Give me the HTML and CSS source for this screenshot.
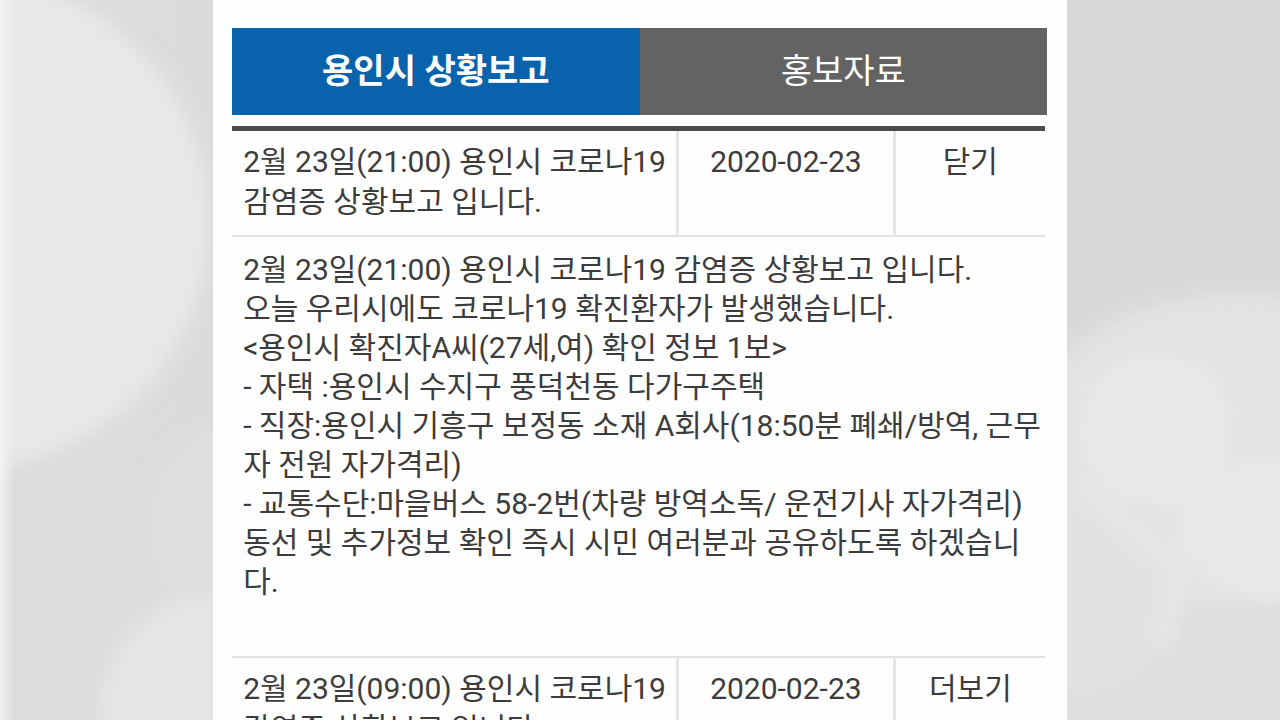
FILE: index.html
```html
<!DOCTYPE html>
<html lang="ko">
<head>
    <meta charset="UTF-8">
    <title>용인시 상황보고</title>
    <meta name="viewport" content="width=device-width, initial-scale=1.0">
    <link rel="stylesheet" href="styles.css">
</head>
<body>
    <svg class="backdrop" viewBox="0 0 1280 720" preserveAspectRatio="none" aria-hidden="true">
        <defs>
            <filter id="soft" x="-20%" y="-20%" width="140%" height="140%">
                <feGaussianBlur stdDeviation="9"/>
            </filter>
            <linearGradient id="base">
                <stop offset="0" stop-color="#dcdcdc"/>
                <stop offset="1" stop-color="#d8d8d8"/>
            </linearGradient>
            <linearGradient id="edge">
                <stop offset="0" stop-color="#f2f2f2"/>
                <stop offset="1" stop-color="#f2f2f2" stop-opacity="0"/>
            </linearGradient>
        </defs>
        <rect width="1280" height="720" fill="url(#base)"/>
        <g filter="url(#soft)">
            <ellipse cx="240" cy="530" rx="95" ry="110" fill="#dedede"/>
            <circle cx="-38" cy="222" r="247" fill="#e8e8e8"/>
            <circle cx="215" cy="710" r="116" fill="#e5e5e5"/>
            <rect x="1040" y="590" width="260" height="150" fill="#dedede"/>
            <ellipse cx="1240" cy="450" rx="220" ry="157" fill="#e3e3e3"/>
            <ellipse cx="1285" cy="528" rx="110" ry="72" fill="#e8e8e8"/>
            <circle cx="1070" cy="585" r="112" fill="#e2e2e2"/>
            <circle cx="1155" cy="430" r="74" fill="#e9e9e9"/>
            <path d="M1075 480L1180 570L1165 650" fill="none" stroke="#e7e7e7" stroke-width="16"/>
        </g>
        <rect width="14" height="720" fill="url(#edge)"/>
    </svg>

    <main class="panel">
        <div class="tabs">
            <button type="button" class="tab active">용인시 상황보고</button>
            <button type="button" class="tab">홍보자료</button>
        </div>

        <table class="board">
            <colgroup>
                <col>
                <col class="col-date">
                <col class="col-action">
            </colgroup>
            <tbody>
                <tr class="item">
                    <td>2월 23일(21:00) 용인시 코로나19 감염증 상황보고 입니다.</td>
                    <td>2020-02-23</td>
                    <td><button type="button" class="toggle">닫기</button></td>
                </tr>
                <tr class="detail">
                    <td colspan="3">
                        <p>2월 23일(21:00) 용인시 코로나19 감염증 상황보고 입니다.</p>
                        <p>오늘 우리시에도 코로나19 확진환자가 발생했습니다.</p>
                        <p>&lt;용인시 확진자A씨(27세,여) 확인 정보 1보&gt;</p>
                        <p>- 자택 :용인시 수지구 풍덕천동 다가구주택</p>
                        <p>- 직장:용인시 기흥구 보정동 소재 A회사(18:50분 폐쇄/방역, 근무자 전원 자가격리)</p>
                        <p>- 교통수단:마을버스 58-2번(차량 방역소독/ 운전기사 자가격리)</p>
                        <p>동선 및 추가정보 확인 즉시 시민 여러분과 공유하도록 하겠습니다.</p>
                    </td>
                </tr>
                <tr class="item">
                    <td>2월 23일(09:00) 용인시 코로나19 감염증 상황보고 입니다.</td>
                    <td>2020-02-23</td>
                    <td><button type="button" class="toggle">더보기</button></td>
                </tr>
            </tbody>
        </table>
    </main>
</body>
</html>
```
FILE: styles.css
```css
* {
    box-sizing: border-box;
}

html {
    scrollbar-width: none;
}

body {
    margin: 0;
    font-family: Roboto, "Noto Sans CJK KR", sans-serif;
    font-size: 30px;
    line-height: 40px;
    color: #3c3c3c;
}

.backdrop {
    position: fixed;
    top: 0;
    left: 0;
    width: 100%;
    height: 100%;
    z-index: -1;
}

.panel {
    width: 66.7%;
    min-height: 100vh;
    margin: 0 auto;
    padding: 28px 22px 0 19px;
    background: #fefefe;
}

/* the tab bar is slightly wider than the board */
.tabs {
    display: flex;
    margin: 0 -2px 11px 0;
}

.tab {
    flex: 1;
    padding: 23px 0 24px;
    border: none;
    background: #636363;
    color: #fff;
    font-family: inherit;
    font-size: 34px;
    line-height: 40px;
    cursor: pointer;
}

.tab.active {
    background: #0863ac;
    font-weight: bold;
}

.board {
    width: 100%;
    table-layout: fixed;
    border-collapse: separate;
    border-spacing: 0;
    border-top: 5px solid #4c4c4c;
}

.col-date {
    width: 217px;
}

.col-action {
    width: 152px;
}

.board td {
    border-bottom: 2px solid #e2e2e2;
    vertical-align: top;
}

.item td {
    padding: 11px 0 13px;
    text-align: center;
}

.item td + td {
    border-left: 3px solid #e6e6e6;
}

.item td:first-child {
    padding-left: 11px;
    text-align: left;
}

.toggle {
    padding: 0;
    border: none;
    background: none;
    color: inherit;
    font: inherit;
    cursor: pointer;
}

.board .detail td {
    padding: 13px 2px 55px 11px;
    line-height: 39px;
}

.detail p {
    margin: 0;
}
```
